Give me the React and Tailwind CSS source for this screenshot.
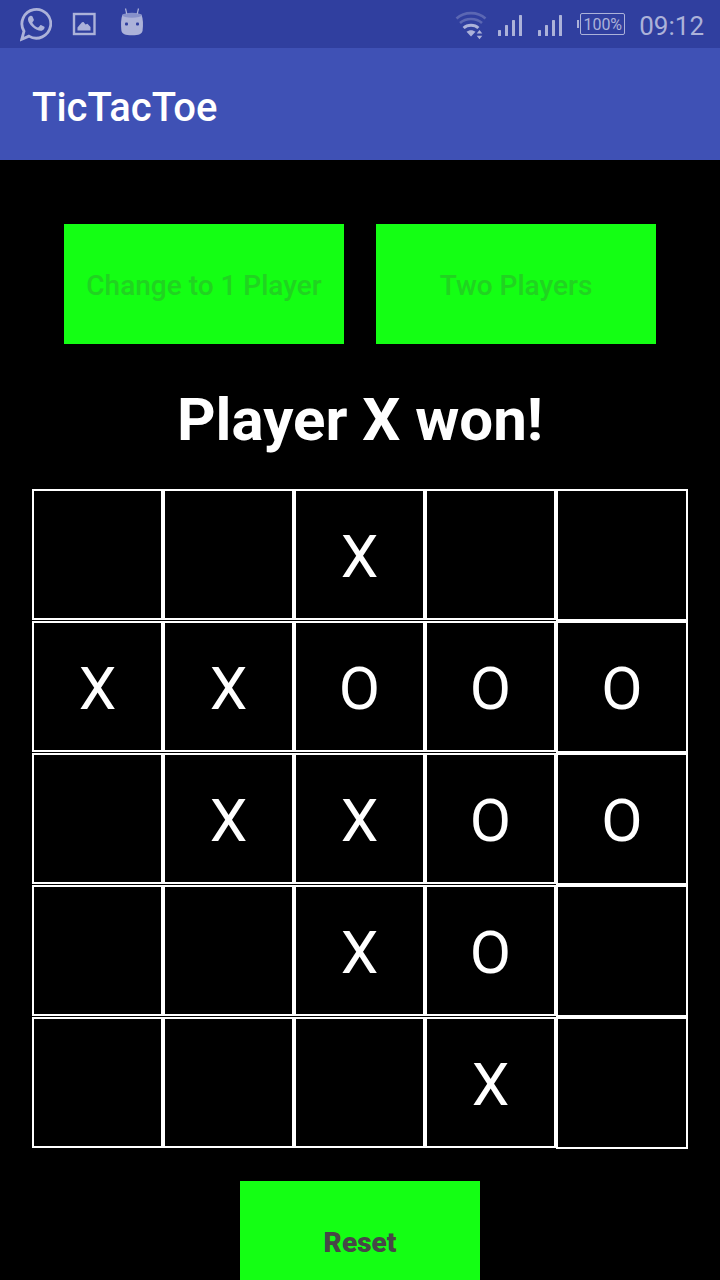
const board = [
  ["", "", "X", "", ""],
  ["X", "X", "O", "O", "O"],
  ["", "X", "X", "O", "O"],
  ["", "", "X", "O", ""],
  ["", "", "", "X", ""],
];

function ChatIcon() {
  return (
    <svg viewBox="20 0 32 48" className="h-12 w-8" aria-hidden="true">
      <path
        d="M21.800 39.200 24 31.200A14.400 14.400 0 1 1 28.900 36.100Z"
        fill="none"
        stroke="currentColor"
        strokeWidth="2.800"
      />
      <path
        d="M30.100 15.900c.9-.4 2-.3 2.400.6l1.300 3c.3.8-.1 1.300-1.200 2.500-.3.4-.3.7 0 1.200 1.200 2 2.800 3.300 5 4.200.5.2.8.1 1.200-.3l1.300-1.600c.4-.5.8-.5 1.300-.2l2.600 1.300c.6.3.7.6.5 1.400-.5 1.900-2.200 2.800-4 2.800-1.800 0-5.400-1.300-8.200-4.100-2.500-2.500-4.300-5.300-4.300-7.300 0-1.600.8-2.900 2.100-3.500Z"
        fill="currentColor"
      />
    </svg>
  );
}

function PictureIcon() {
  return (
    <svg viewBox="68 0 32 48" className="h-12 w-8" aria-hidden="true">
      <rect x="74" y="14" width="20.500" height="20" fill="none" stroke="currentColor" strokeWidth="2.400" />
      <path
        d="M77.500 30.500V27.500L80 24.500 82 22.200 83.500 22 85.500 24.500 87.500 23.800 90.500 27V30.500Z"
        fill="currentColor"
      />
    </svg>
  );
}

function RobotIcon() {
  return (
    <svg viewBox="116 0 32 48" className="h-12 w-8" aria-hidden="true">
      <path
        d="M122.500 14.500H141.500C143.200 19 143.300 25 142.600 30.500 142 34 139 35.300 132 35.300S122 34 121.400 30.500C120.700 25 120.800 19 122.500 14.500Z"
        fill="currentColor"
      />
      <ellipse cx="132" cy="15.300" rx="9.500" ry="2.500" fill="#8791ca" />
      <path d="M125.500 8.500 126.800 14M138.500 8.500 137.200 14" stroke="currentColor" strokeWidth="1.200" />
      <rect x="125" y="22.500" width="3" height="3" rx="1" fill="#303f9f" />
      <rect x="136" y="22.500" width="3" height="3" rx="1" fill="#303f9f" />
    </svg>
  );
}

function WifiIcon() {
  return (
    <svg viewBox="452 0 36 48" className="h-12 w-9" aria-hidden="true">
      <g fill="none" stroke="currentColor" strokeWidth="2.600">
        <path d="M455.500 18.500C463.500 11.300 476.500 11.300 484.500 18.500" opacity=".35" />
        <path d="M459 23C465 17.700 475 17.700 481 23" opacity=".35" />
        <path d="M462.600 28C466.600 24.300 473.400 24.300 477.400 28" strokeWidth="3" />
      </g>
      <path d="M465.500 31.800C468 29.600 472 29.600 474.500 31.800L470 36.500Z" fill="currentColor" />
      <path d="M478.500 30 481.300 33.500H475.700ZM478.500 39.200 481.300 35.700H475.700Z" fill="currentColor" />
    </svg>
  );
}

function SignalIcon() {
  return (
    <svg viewBox="536 0 28 48" className="h-12 w-7" aria-hidden="true">
      <g fill="currentColor">
        <rect x="537" y="30" width="3" height="6" rx=".6" />
        <rect x="544" y="25" width="3" height="11" rx=".6" />
        <rect x="551" y="20" width="3" height="16" rx=".6" />
        <rect x="558" y="15" width="3" height="21" rx=".6" />
      </g>
    </svg>
  );
}

function StatusBar() {
  return (
    <div className="flex h-12 shrink-0 items-center justify-between bg-[#303f9f] pr-4 pl-5 text-[#acb2d9]">
      <div className="flex gap-4">
        <ChatIcon />
        <PictureIcon />
        <RobotIcon />
      </div>
      <div className="flex items-center gap-3">
        <div className="flex items-center gap-2">
          <WifiIcon />
          <div className="flex gap-3">
            <SignalIcon />
            <SignalIcon />
          </div>
        </div>
        <div className="flex items-center gap-3.5">
          <div className="flex items-center gap-px">
            <span className="h-2 w-0.5 bg-current" />
            <span className="flex h-[22px] w-[45px] items-center justify-center rounded-xs border border-current pt-0.5 text-[16px] leading-none">
              100%
            </span>
          </div>
          <time className="pt-1 text-[26px] leading-8">09:12</time>
        </div>
      </div>
    </div>
  );
}

export default function App() {
  return (
    <div className="flex h-dvh flex-col bg-black font-['Roboto',sans-serif] text-white">
      <StatusBar />
      <header className="flex h-28 shrink-0 items-center bg-[#3f51b5] px-8 pt-2">
        <h1 className="text-[40px] leading-12 font-medium">TicTacToe</h1>
      </header>
      <main className="flex min-h-0 flex-1 flex-col overflow-y-auto px-8 pt-16 [scrollbar-width:none]">
        <div className="flex shrink-0 gap-8 px-8">
          <button disabled className="h-30 flex-1 bg-[#14ff14] pt-1 text-[28px] font-medium text-[#21d321]">
            Change to 1 Player
          </button>
          <button disabled className="h-30 flex-1 bg-[#14ff14] pt-1 text-[28px] font-medium text-[#21d321]">
            Two Players
          </button>
        </div>
        <h2 className="mt-10 mb-[33px] shrink-0 text-center text-[60px] leading-[72px] font-bold">
          Player X won!
        </h2>
        <div className="grid shrink-0 grid-cols-[repeat(4,131fr)_132fr] items-start">
          {board.flatMap((row, r) =>
            row.map((mark, c) => (
              <button
                key={`${r}-${c}`}
                aria-label={`Row ${r + 1}, column ${c + 1}${mark ? `: ${mark}` : ""}`}
                className="flex aspect-square min-w-0 items-center justify-center border-2 border-white pt-1 text-[60px] leading-[70px]"
              >
                {mark}
              </button>
            ))
          )}
        </div>
        <button className="mt-8 h-30 w-60 shrink-0 self-center bg-[#14ff14] pt-1 text-[28px] font-black text-[#474747]">
          Reset
        </button>
      </main>
    </div>
  );
}
